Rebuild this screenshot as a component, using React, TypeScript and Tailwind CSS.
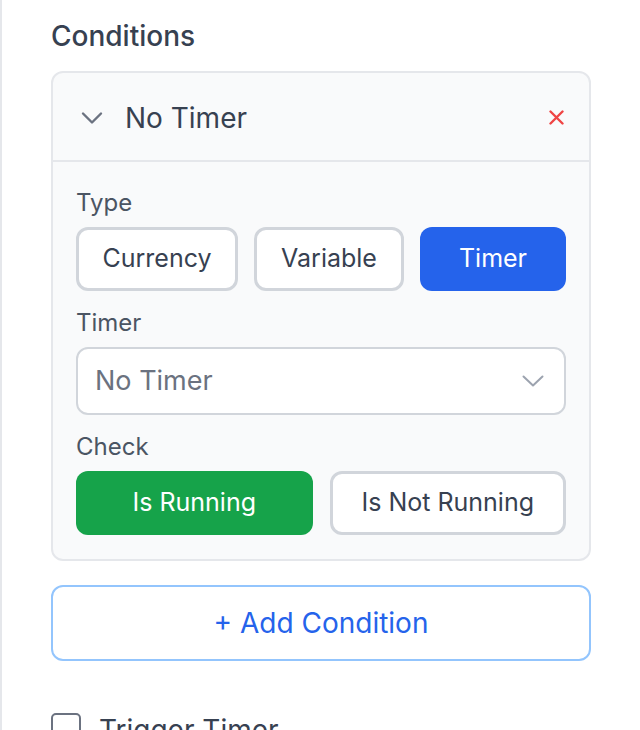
import { useState } from 'react';

const typeOptions = [
  { label: 'Currency', w: 'w-[162px]' },
  { label: 'Variable', w: 'w-[150px]' },
  { label: 'Timer', w: 'w-[146px]' },
];

const App = () => {
  const [type, setType] = useState('Timer');
  const [running, setRunning] = useState(true);

  return (
    <div className="w-[640px] h-[730px] overflow-hidden bg-white border-l-2 border-[#e5e7eb] font-['Inter',sans-serif]">
      <div className="pl-[49px] w-[589px] pt-[18px]">
        {/* Section title */}
        <h2 className="text-[28px] leading-[36px] font-medium text-[#374151] mb-[17px]">Conditions</h2>

        {/* Condition card */}
        <div className="border-2 border-[#e5e7eb] rounded-[12px] bg-[#f9fafb]">
          <div className="h-[89px] flex items-center pl-[28px] pr-[25px] pt-[2px] border-b-2 border-[#e5e7eb]">
            <svg width="22" height="14" viewBox="0 0 22 14" fill="none" className="text-[#6b7280]">
              <path d="M2 2.5 L11 11.5 L20 2.5" stroke="currentColor" strokeWidth="2.4" strokeLinecap="round" strokeLinejoin="round" />
            </svg>
            <span className="ml-[22px] text-[28px] leading-none text-[#374151]">No Timer</span>
            <button className="ml-auto text-[#ef4444]">
              <svg width="15" height="15" viewBox="0 0 15 15" fill="none">
                <path d="M1.5 1.5 L13.5 13.5 M13.5 1.5 L1.5 13.5" stroke="currentColor" strokeWidth="2.4" strokeLinecap="round" />
              </svg>
            </button>
          </div>

          <div className="px-[23px] pt-[25px] pb-[24px]">
            <div className="text-[24px] leading-[32px] text-[#4b5563]">Type</div>
            <div className="mt-[8px] flex gap-[16px]">
              {typeOptions.map((opt) => (
                <button
                  key={opt.label}
                  onClick={() => setType(opt.label)}
                  className={
                    type === opt.label
                      ? `${opt.w} h-[64px] rounded-[12px] bg-[#2563eb] text-white text-[25px]`
                      : `${opt.w} h-[64px] rounded-[12px] bg-white border-[3px] border-[#d1d5db] text-[#374151] text-[25px]`
                  }
                >
                  {opt.label}
                </button>
              ))}
            </div>

            <div className="mt-[16px] text-[24px] leading-[32px] text-[#4b5563]">Timer</div>
            <div className="mt-[8px] h-[68px] rounded-[12px] bg-white border-2 border-[#d1d5db] flex items-center pl-[17px] pr-[20px]">
              <span className="text-[27px] text-[#6b7280]">No Timer</span>
              <svg width="22" height="12" viewBox="0 0 22 12" fill="none" className="ml-auto text-[#9ca3af]">
                <path d="M1.5 1.5 L11 10.5 L20.5 1.5" stroke="currentColor" strokeWidth="2" strokeLinecap="round" strokeLinejoin="round" />
              </svg>
            </div>

            <div className="mt-[16px] text-[24px] leading-[32px] text-[#4b5563]">Check</div>
            <div className="mt-[8px] grid grid-cols-2 gap-[17px]">
              <button
                onClick={() => setRunning(true)}
                className={
                  running
                    ? 'h-[64px] rounded-[12px] bg-[#16a34a] text-white text-[25px]'
                    : 'h-[64px] rounded-[12px] bg-white border-[3px] border-[#d1d5db] text-[#374151] text-[25px]'
                }
              >
                Is Running
              </button>
              <button
                onClick={() => setRunning(false)}
                className={
                  !running
                    ? 'h-[64px] rounded-[12px] bg-[#16a34a] text-white text-[25px]'
                    : 'h-[64px] rounded-[12px] bg-white border-[3px] border-[#d1d5db] text-[#374151] text-[25px]'
                }
              >
                Is Not Running
              </button>
            </div>
          </div>
        </div>

        {/* Add condition */}
        <button className="mt-[24px] w-full h-[76px] rounded-[12px] border-2 border-[#93c5fd] bg-white text-[#2563eb] text-[28px]">
          + Add Condition
        </button>

        {/* Trigger timer */}
        <label className="mt-[52px] flex items-start gap-[18px]">
          <span className="w-[30px] h-[30px] rounded-[5px] border-2 border-[#6b7280] bg-white shrink-0"></span>
          <span className="text-[28px] leading-[36px] text-[#374151] -mt-[1px]">Trigger Timer</span>
        </label>
      </div>
    </div>
  );
};

export default App;
